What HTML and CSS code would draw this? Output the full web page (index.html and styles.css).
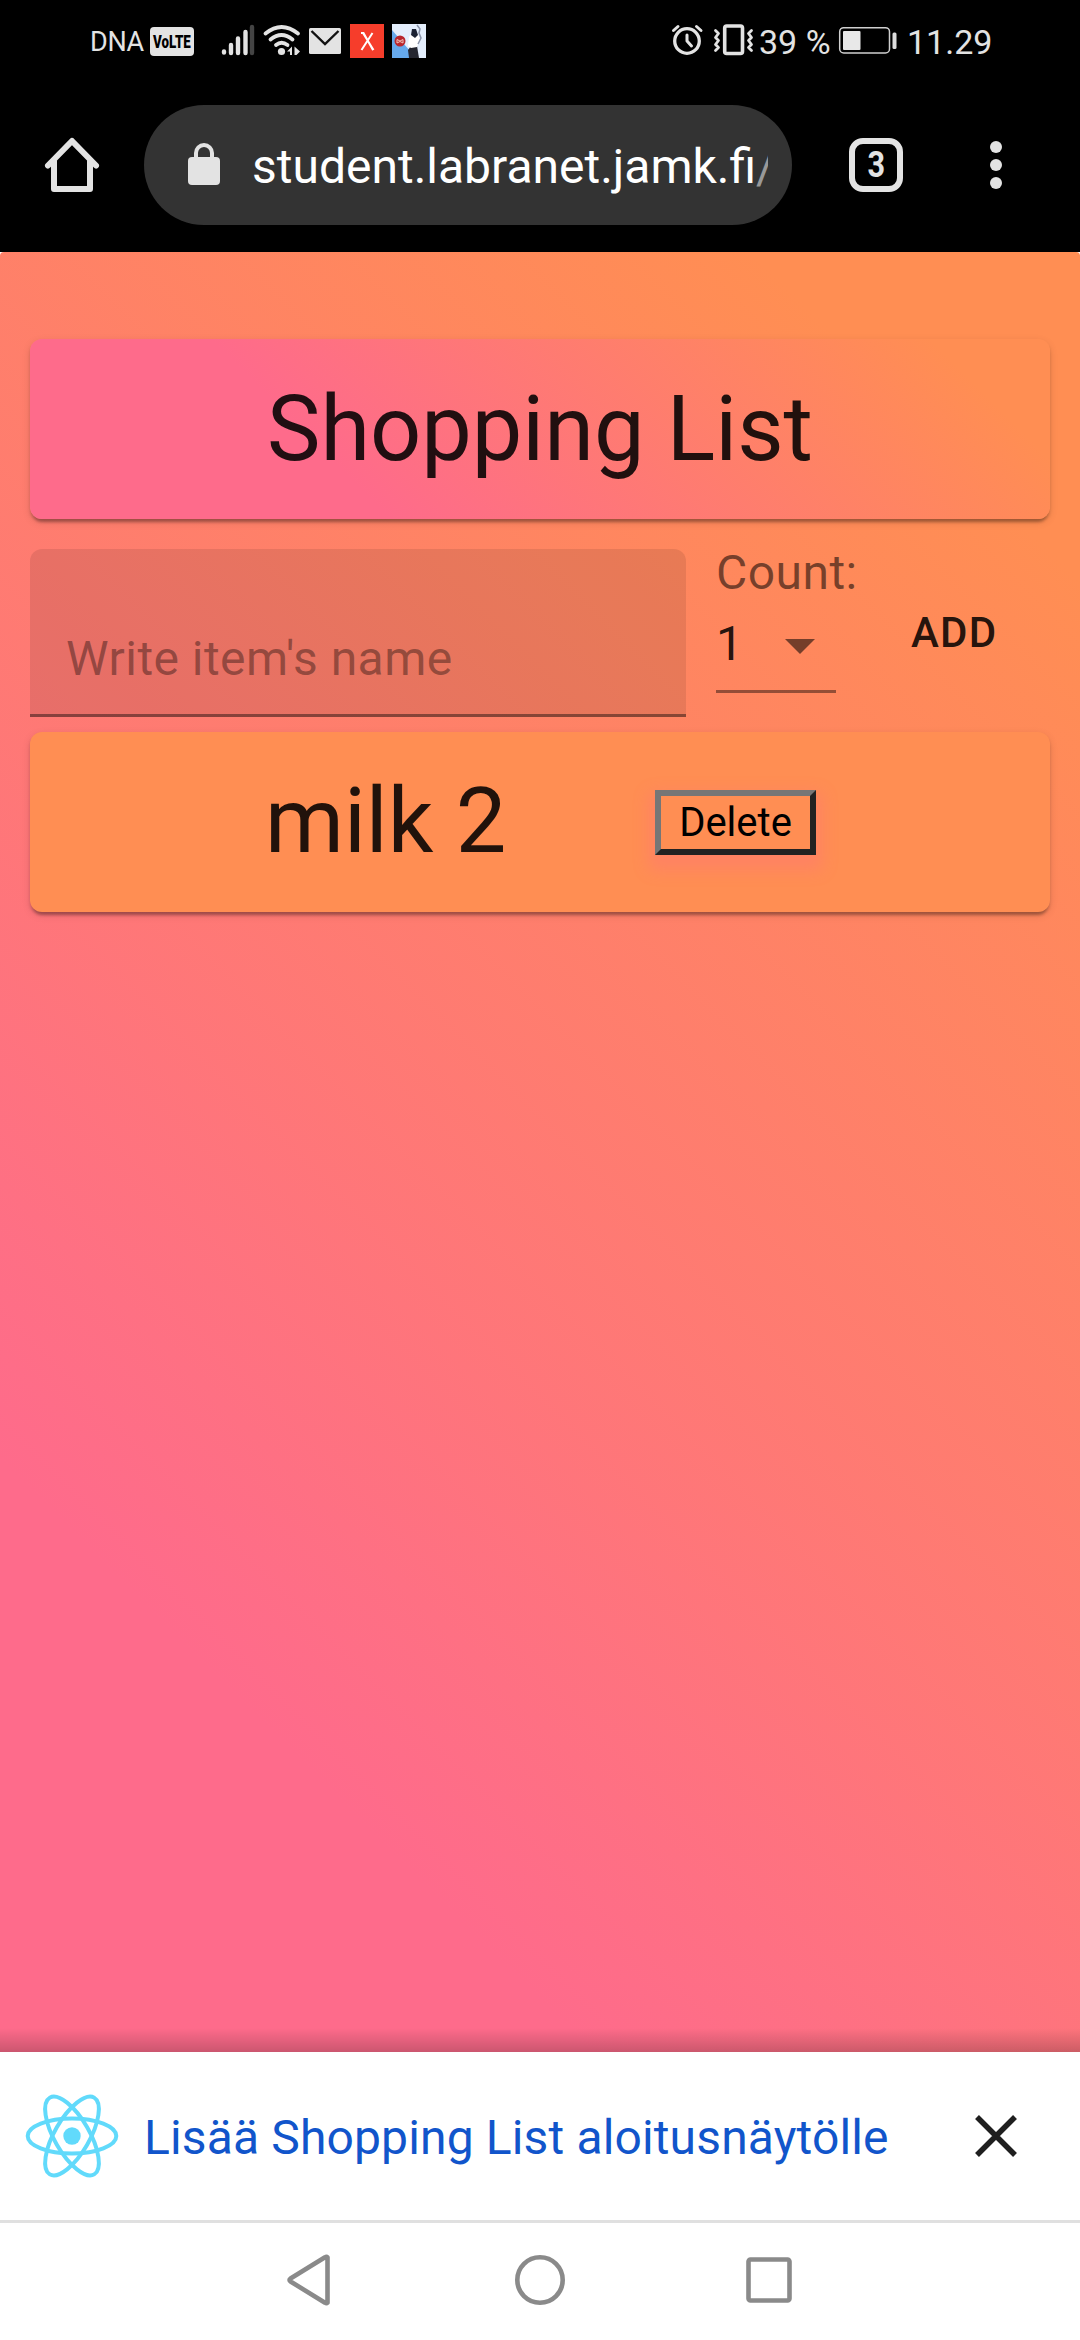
FILE: index.html
```html
<!DOCTYPE html>
<html lang="fi">
<head>
<meta charset="utf-8">
<title>Shopping List</title>
<link rel="stylesheet" href="styles.css">
</head>
<body>
<div class="status">
  <span class="carrier">DNA</span>
  <span class="volte"><b>VoLTE</b></span>
  <svg class="status-icons" width="206" height="84" viewBox="220 0 206 84">
    <g stroke="#e3e3e3" stroke-width="4.4" stroke-linecap="round">
      <path d="M224 51.500v1M231 45v8M238 38.500v14.500M245.500 32v21"/><path stroke="#444" d="M252 27v26"/>
    </g>
    <g fill="none" stroke="#e3e3e3" stroke-width="3.800" stroke-linecap="round">
      <path d="M265.500 33.500Q281.500 20.500 298 33.500M270.500 39.500Q281.500 30.500 292.500 39.500M276 45Q281.500 40.500 287.500 45"/>
    </g>
    <circle cx="281.500" cy="51.500" r="3.600" fill="#e3e3e3"/>
    <path d="M287 51.500l5-5v8.500h-2v-3.500zM294.500 46.500l5.500 5-3.500 3.500h-2z" fill="#e3e3e3"/>
    <rect x="309" y="28" width="32" height="26" rx="1.500" fill="#e3e3e3"/>
    <path d="M311.500 31L325 44l13.500-13" fill="none" stroke="#111" stroke-width="2.400"/>
    <rect x="350" y="24" width="34" height="34" fill="#f63d2b"/>
    <path d="M361 33h2.500L373 50M372.500 33L361.500 50M363 33l10.500 17" fill="none" stroke="#fff" stroke-width="2"/>
    <rect x="392" y="24" width="34" height="34" fill="#e4eefc"/>
    <path d="M392 30l24 28h-24z" fill="#66a9ec"/>
    <path d="M409 58l-1-8 3-4h6l2 12z" fill="#242630"/>
    <path d="M408 46l1-9 3-4 6 1 2 5-3 8-6 1z" fill="#fff"/>
    <path d="M412 29l4 0 2 6-3 3-4-3z" fill="#1b2233"/>
    <path d="M417 25l3 4-1 4 2 5-3 6" fill="none" stroke="#8a93a8" stroke-width="1.500"/>
    <circle cx="400" cy="41" r="5.500" fill="#b9262d"/>
    <path d="M397 39.500l3 1.500 3-1.500v3.500l-3-1.500-3 1.500z" fill="none" stroke="#f3c0b8"/>
  </svg>
  <svg class="status-right" width="85" height="84" viewBox="670 0 85 84">
    <g fill="none" stroke="#e3e3e3" stroke-linecap="round" stroke-linejoin="round">
      <circle cx="687" cy="41" r="12.300" stroke-width="3.300"/>
      <path stroke-width="3" d="M687 35v6l4.500 5M673.500 30.500l4.500-4M696.500 26.500l4.500 4"/>
      <rect x="724.700" y="26" width="17.800" height="27.500" rx="2" stroke-width="3.600"/>
      <path stroke-width="2.800" d="M715.500 30.500l3 3-3 4 3 3-3 4 3 3-3 3M751.500 30.500l-3 3 3 4-3 3 3 4-3 3 3 3"/>
    </g>
  </svg>
  <span class="battery-text">39 %</span>
  <svg class="battery" width="60" height="84" viewBox="838 0 60 84">
    <rect x="839.700" y="27.700" width="49.800" height="25.300" rx="4" fill="none" stroke="#cfcfcf" stroke-width="1.500"/>
    <rect x="843" y="31" width="17.500" height="19" rx="1" fill="#e8e8e8"/>
    <rect x="892.500" y="32.500" width="4" height="16.500" rx="1.500" fill="#ddd"/>
  </svg>
  <span class="clock">11.29</span>
</div>

<div class="toolbar">
  <svg class="home" width="60" height="60" viewBox="42 135 60 60" fill="none" stroke="#e3e3e3" stroke-width="6" stroke-linecap="round" stroke-linejoin="round">
    <path d="M48 165.500L72 141l24 24.500"/><path d="M54 161v28h36v-28"/>
  </svg>
  <div class="omnibox">
    <svg width="32" height="42" viewBox="0 0 32 42"><path d="M8 16V10a8 8 0 0 1 16 0v6" fill="none" stroke="#e3e3e3" stroke-width="4"/><rect y="14" width="32" height="28" rx="4" fill="#e3e3e3"/></svg>
    <div class="url">student.labranet.jamk.fi<span>/</span></div>
  </div>
  <div class="tabs"><span>3</span></div>
  <div class="menu"><i></i><i></i><i></i></div>
</div>

<div class="viewport">
  <main class="page">
    <h1 class="card title">Shopping List</h1>
    <div class="form">
      <input class="field" placeholder="Write item's name">
      <div class="count">
        <label>Count:</label>
        <div class="select"><span>1</span><svg width="30" height="15" viewBox="0 0 30 15"><path d="M0 0h30L15 15z" fill="#000" fill-opacity=".54"/></svg></div>
      </div>
      <div class="add">ADD</div>
    </div>
    <div class="card item"><span>milk 2</span><button class="delete">Delete</button></div>
  </main>
</div>

<div class="banner">
  <svg width="94" height="94" viewBox="-47 -47 94 94" fill="none" stroke="#61dafb" stroke-width="4">
    <circle r="8.700" fill="#61dafb" stroke="none"/>
    <ellipse rx="44.300" ry="17.500"/><ellipse rx="44.300" ry="17.500" transform="rotate(60)"/><ellipse rx="44.300" ry="17.500" transform="rotate(120)"/>
  </svg>
  <span class="install">Lisää Shopping List aloitusnäytölle</span>
  <svg class="close" width="42" height="42" viewBox="0 0 42 42"><path d="M2 2l38 38M40 2L2 40" stroke="#1f1f1f" stroke-width="5.500"/></svg>
</div>
<div class="nav">
  <svg width="506" height="54" viewBox="286 2253 506 54" fill="none" stroke="#8a8a8a" stroke-width="4.600" stroke-linejoin="round">
    <path d="M327.500 2257.300v45.400q-1 1-2.500 0L290.500 2281.500q-2-1.500 0-3L325 2257.300q1.500-1 2.500 0z"/>
    <circle cx="540" cy="2280" r="22.700"/><rect x="748.500" y="2259.500" width="41" height="41" rx="2"/>
  </svg>
</div>
</body>
</html>
```
FILE: styles.css
```css
* { box-sizing: border-box; }
body {
  margin: 0;
  width: 1080px;
  height: 2340px;
  overflow: hidden;
  display: flex;
  flex-direction: column;
  background: #fff;
  font-family: Roboto, "Liberation Sans", sans-serif;
}
svg { display: block; flex: none; }

.status {
  height: 84px;
  flex: none;
  display: flex;
  align-items: center;
  padding-left: 90px;
  background: #000;
  color: #e3e3e3;
  white-space: nowrap;
}
.carrier { width: 60px; font-size: 27px; letter-spacing: -.3px; line-height: 82px; }
.volte {
  width: 44px;
  height: 29px;
  margin: 0 26px 2px 0;
  border-radius: 4px;
  background: #e3e3e3;
  color: #000;
  font-size: 19px;
  font-weight: 900;
  line-height: 30px;
  display: flex;
  justify-content: center;
}
.volte b { font-weight: 900; transform: scaleX(.7); }
.status-right { margin-left: 244px; }
.battery-text { width: 79px; margin-left: 4px; font-size: 34px; line-height: 82px; }
.clock { margin-left: 9px; font-size: 34px; line-height: 82px; }

.toolbar {
  height: 168px;
  flex: none;
  display: flex;
  align-items: center;
  padding: 0 78px 6px 42px;
  background: #000;
}
.omnibox {
  width: 648px;
  height: 120px;
  margin-left: 42px;
  padding: 0 20px 0 44px;
  border-radius: 60px;
  background: #333;
  display: flex;
  align-items: center;
}
.omnibox svg { margin-bottom: 2px; }
.url {
  margin: 4px 0 0 32px;
  width: 516px;
  overflow: hidden;
  white-space: nowrap;
  font-size: 48px;
  line-height: 60px;
  color: #fff;
}
.url span { color: #999; }
.tabs {
  width: 54px;
  height: 54px;
  margin-left: 57px;
  border: 6px solid #e3e3e3;
  border-radius: 14px;
  display: flex;
  align-items: center;
  justify-content: center;
  color: #e3e3e3;
  font-size: 36px;
  font-weight: 700;
}
.tabs span { transform: scaleX(.85); }
.menu { margin-left: 87px; display: flex; flex-direction: column; gap: 6px; }
.menu i { width: 12px; height: 12px; border-radius: 50%; background: #e3e3e3; }

.viewport { position: relative; height: 1800px; flex: none; overflow: hidden; border-radius: 4px 4px 0 0; }
.viewport::after {
  content: "";
  position: absolute;
  left: 0;
  right: 0;
  bottom: 0;
  height: 24px;
  background: linear-gradient(rgba(0, 0, 0, 0), rgba(0, 0, 0, .2));
}
.page {
  height: 2190px;
  padding: 87px 30px 0;
  background: linear-gradient(45deg, #fe6b8b 30%, #ff8e53 90%);
}
.card {
  height: 180px;
  margin: 0;
  border-radius: 12px;
  box-shadow: 0 6px 3px -3px rgba(0, 0, 0, .2), 0 3px 3px 0 rgba(0, 0, 0, .14), 0 3px 9px 0 rgba(0, 0, 0, .12);
  color: rgba(0, 0, 0, .87);
  font-size: 90px;
  font-weight: 400;
  line-height: 182px;
}
.title { text-align: center; background: linear-gradient(45deg, #fe6b8b 30%, #ff8e53 90%); }

.form { height: 168px; margin: 30px 0 15px; display: flex; color: rgba(0, 0, 0, .87); }
.field {
  width: 656px;
  height: 168px;
  padding: 54px 36px 0;
  border: 0;
  border-bottom: 3px solid rgba(0, 0, 0, .42);
  border-radius: 12px 12px 0 0;
  background: rgba(0, 0, 0, .09);
  font: 400 48px Roboto, sans-serif;
  letter-spacing: .00938em;
}
.field::placeholder { color: rgba(0, 0, 0, .87); opacity: .42; }
.count { width: 196px; padding-left: 30px; font-size: 48px; }
.count label { display: block; height: 48px; line-height: 47px; color: rgba(0, 0, 0, .54); letter-spacing: .00938em; }
.select {
  width: 120px;
  height: 96px;
  padding-right: 21px;
  border-bottom: 3px solid rgba(0, 0, 0, .42);
  display: flex;
  align-items: center;
  justify-content: space-between;
  line-height: 93px;
}
.select svg { margin-top: 6px; }
.add { margin-left: 29px; font-size: 42px; font-weight: 500; letter-spacing: .02857em; line-height: 168px; }

.item { display: flex; align-items: center; padding-left: 235px; background: #ff8e53; }
.item span { width: 390px; }
.delete {
  width: 161px;
  height: 65px;
  padding: 0;
  border: 6px solid;
  border-color: #767676 #222 #222 #767676;
  background: #ff8e53;
  box-shadow: 0 9px 15px 6px rgba(255, 105, 135, .3);
  color: #000;
  font: 400 40px Roboto, sans-serif;
}

.banner { height: 171px; flex: none; display: flex; align-items: center; padding: 0 63px 0 25px; border-bottom: 3px solid #e0e0e0; }
.install { margin: 2px 0 0 25px; flex: 1; font-size: 48px; letter-spacing: .14px; color: #1155cb; white-space: nowrap; }
.nav { height: 117px; flex: none; padding: 30px 0 0 286px; }
```
